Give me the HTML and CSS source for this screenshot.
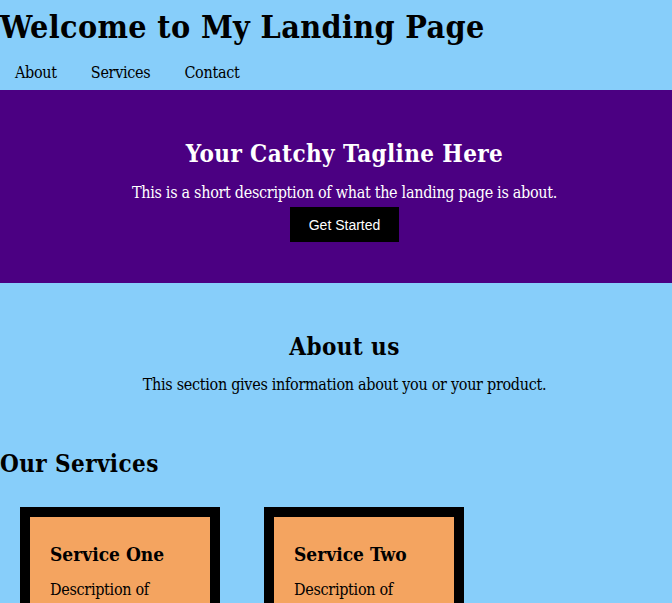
FILE: index.html
```html
<!DOCTYPE html>
<html>
<head>
<meta charset="utf-8">
<link rel="stylesheet" href="styles.css">
</head>
<body>
<header class="site-header">
  <h1 class="site-title">Welcome to My Landing Page</h1>
  <nav class="nav">
    <a class="nav-link" href="#about">About</a>
    <a class="nav-link" href="#services">Services</a>
    <a class="nav-link" href="#contact">Contact</a>
  </nav>
</header>
<section class="hero">
  <h2 class="hero-title">Your Catchy Tagline Here</h2>
  <p class="hero-text">This is a short description of what the landing page is about.</p>
  <button class="cta">Get Started</button>
</section>
<section class="about" id="about">
  <h2 class="about-title">About us</h2>
  <p class="about-text">This section gives information about you or your product.</p>
</section>
<section class="services" id="services">
  <h2 class="services-title">Our Services</h2>
  <div class="cards">
    <div class="card">
      <h3 class="card-title">Service One</h3>
      <p class="card-text">Description of service one.</p>
    </div>
    <div class="card">
      <h3 class="card-title">Service Two</h3>
      <p class="card-text">Description of service two.</p>
    </div>
  </div>
</section>
</body>
</html>
```
FILE: styles.css
```css
html, body {
  margin: 0;
  padding: 0;
}
body {
  background: #87cefa;
  font-family: "DejaVu Serif Condensed", "DejaVu Serif", Georgia, serif;
  color: #000;
  font-size: 16px;
  letter-spacing: -0.3px;
}
.site-title {
  margin: 0;
  font-size: 32px;
  line-height: 54px;
  font-weight: bold;
  letter-spacing: 0.35px;
}
.nav {
  display: flex;
  gap: 34px;
  padding: 0 0 0 15px;
  height: 36px;
  align-items: center;
}
.nav-link {
  color: #000;
  text-decoration: none;
}
.hero {
  background: #4b0082;
  color: #fff;
  text-align: center;
  padding: 49px 0 41px 17px;
  display: flex;
  flex-direction: column;
  align-items: center;
}
.hero-title {
  margin: 0 0 15px;
  font-size: 24px;
  letter-spacing: 0.4px;
}
.hero-text {
  margin: 0 0 5px;
}
.cta {
  background: #000;
  color: #fff;
  border: none;
  font-family: Arial, "Liberation Sans", sans-serif;
  font-size: 14px;
  letter-spacing: 0;
  width: 109px;
  height: 35px;
}
.about {
  text-align: center;
  padding: 49px 0 0 17px;
}
.about-title {
  margin: 0 0 14px;
  font-size: 24px;
  letter-spacing: 0.4px;
}
.about-text {
  margin: 0;
}
.services-title {
  margin: 55px 0 29px;
  font-size: 24px;
  letter-spacing: 0.4px;
}
.cards {
  display: flex;
  gap: 44px;
  padding-left: 20px;
}
.card {
  width: 140px;
  background: #f4a460;
  border: 10px solid #000;
  padding: 20px;
}
.card-title {
  margin: 6px 0 13px;
  font-size: 19px;
  letter-spacing: 0;
}
.card-text {
  margin: 0;
  line-height: 24px;
}
```
